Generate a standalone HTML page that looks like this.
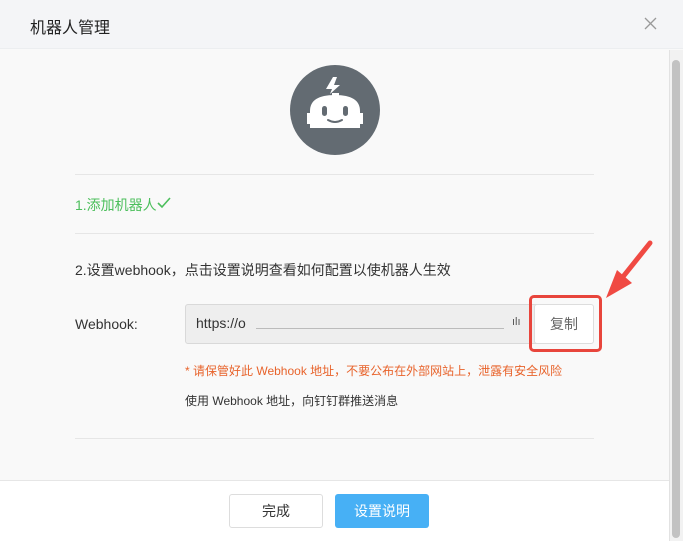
<!DOCTYPE html>
<html><head><meta charset="utf-8"><style>
*{margin:0;padding:0;box-sizing:border-box}
body{width:683px;height:541px;overflow:hidden;background:#f9f9f9;font-family:"Liberation Sans","Noto Sans CJK SC",sans-serif;position:relative;color:#333}
.a{position:absolute}
.hr{position:absolute;left:75px;width:519px;height:1px;background:#e6e6e6}
</style></head><body>
<div class="a" style="left:0;top:0;width:683px;height:49px;background:#f4f5f7;border-bottom:1px solid #eceef0"></div>
<div class="a" style="left:30px;top:14px;font-size:16px;color:#222">机器人管理</div>
<svg class="a" style="left:644px;top:17px" width="13" height="13" viewBox="0 0 13 13"><path d="M1 1L12 12M12 1L1 12" stroke="#999" stroke-width="1.3"/></svg>
<div class="a" style="left:669px;top:50px;width:14px;height:491px;background:#f2f2f2;border-left:1px solid #e2e2e2"></div>
<div class="a" style="left:672px;top:60px;width:8px;height:478px;background:#c2c2c2;border-radius:4px"></div>
<svg class="a" style="left:290px;top:65px" width="90" height="90" viewBox="0 0 90 90">
<circle cx="45" cy="45" r="45" fill="#636b72"/>
<path d="M43 12L36 24H42L40 29L50 20H44L47 12Z" fill="#fff"/>
<path d="M20 46Q20 30 45 30Q70 30 70 46V48H73V59H70V63H20V59H17V48H20Z" fill="#fff"/>
<rect x="42" y="28" width="7" height="3" fill="#fff"/>
<rect x="32" y="41" width="5" height="10" rx="2.5" fill="#636b72"/>
<rect x="53" y="41" width="5" height="10" rx="2.5" fill="#636b72"/>
<path d="M38 55Q45 59 52 55" stroke="#636b72" stroke-width="2" fill="none" stroke-linecap="round"/>
</svg>
<div class="hr" style="top:174px"></div>
<div class="a" style="left:75px;top:195px;font-size:14px;color:#4cbf5c">1.添加机器人</div>
<svg class="a" style="left:157px;top:197px" width="14" height="12" viewBox="0 0 14 12"><path d="M1 6L5 10L13 1" stroke="#4cbf5c" stroke-width="1.6" fill="none"/></svg>
<div class="hr" style="top:233px"></div>
<div class="a" style="left:75px;top:260px;font-size:14px;color:#333">2.设置webhook，点击设置说明查看如何配置以使机器人生效</div>
<div class="a" style="left:75px;top:316px;font-size:14px;color:#333">Webhook:</div>
<div class="a" style="left:185px;top:304px;width:355px;height:40px;background:#eeeeee;border:1px solid #d9d9d9;border-radius:3px"></div>
<div class="a" style="left:196px;top:315px;font-size:14px;color:#333">https://o</div>
<div class="a" style="left:256px;top:328px;width:248px;height:1px;background:#bbb"></div>
<div class="a" style="left:512px;top:316px;font-size:11px;color:#555">ılı</div>
<div class="a" style="left:529px;top:295px;width:73px;height:57px;border:3px solid #e8453c;border-radius:5px"></div>
<div class="a" style="left:534px;top:304px;width:60px;height:40px;background:#fff;border:1px solid #ddd;border-radius:3px;font-size:14px;color:#666;text-align:center;line-height:38px">复制</div>
<svg class="a" style="left:600px;top:238px" width="56" height="64" viewBox="600 238 56 64">
<line x1="650" y1="243" x2="622" y2="278" stroke="#f04a43" stroke-width="5" stroke-linecap="round"/>
<path d="M606 298L632 283L617 270Z" fill="#f04a43"/>
</svg>
<div class="a" style="left:185px;top:362px;font-size:12px;color:#e8632b">* 请保管好此 Webhook 地址，不要公布在外部网站上，泄露有安全风险</div>
<div class="a" style="left:185px;top:392px;font-size:12px;color:#333">使用 Webhook 地址，向钉钉群推送消息</div>
<div class="hr" style="top:438px"></div>
<div class="a" style="left:0;top:480px;width:669px;height:61px;background:#fff;border-top:1px solid #e6e6e6"></div>
<div class="a" style="left:229px;top:494px;width:94px;height:34px;background:#fff;border:1px solid #ddd;border-radius:3px;font-size:14px;color:#333;text-align:center;line-height:32px">完成</div>
<div class="a" style="left:335px;top:494px;width:94px;height:34px;background:#47b0f5;border-radius:3px;font-size:14px;color:#fff;text-align:center;line-height:34px">设置说明</div>
</body></html>
